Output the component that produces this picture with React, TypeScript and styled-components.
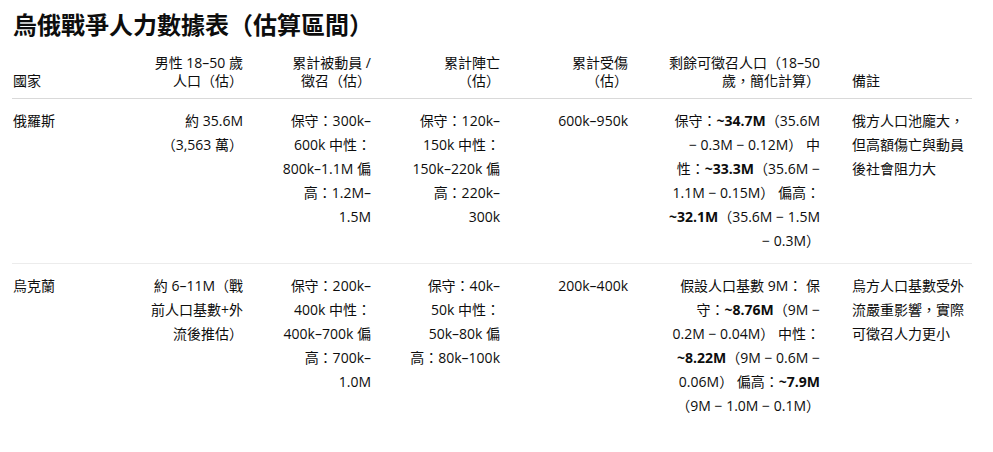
import React from "react";
import styled, { createGlobalStyle } from "styled-components";

const GlobalStyle = createGlobalStyle`
  html, body {
    margin: 0;
    padding: 0;
    background: #ffffff;
  }
  body {
    font-family: "Open Sans", "Noto Sans CJK TC", sans-serif;
    color: #0d0d0d;
    -webkit-font-smoothing: antialiased;
  }
`;

const Page = styled.div`
  padding: 9px 21px 0 12px;
`;

const Title = styled.h1`
  margin: 0 0 0 1px;
  font-size: 24px;
  line-height: 31px;
  font-weight: 700;
  color: #0d0d0d;
`;

const Table = styled.table`
  margin-top: 6px;
  width: 960px;
  table-layout: fixed;
  border-collapse: collapse;
  font-size: 14px;
`;

type Align = "left" | "right";

const Th = styled.th<{ $align: Align }>`
  text-align: ${(p) => p.$align};
  vertical-align: bottom;
  font-weight: 400;
  line-height: 18px;
  padding: 8px 16px 8px 16px;
  white-space: nowrap;
  border-bottom: 1px solid #d9d9d9;
  &:first-child { padding-left: 1px; }
  &:last-child { padding-right: 0; }
`;

const Td = styled.td<{ $align: Align }>`
  text-align: ${(p) => p.$align};
  vertical-align: top;
  line-height: 24px;
  padding: 10px 16px 10px 16px;
  white-space: nowrap;
  &:first-child { padding-left: 1px; }
  &:last-child { padding-right: 0; }
`;

const Row = styled.tr<{ $divider: boolean }>`
  border-bottom: ${(p) => (p.$divider ? "1px solid #ececec" : "none")};
`;

const Strong = styled.strong`
  font-weight: 700;
`;

type Line = React.ReactNode;
type Cell = Line[];

const widths = [115, 132, 128, 129, 128, 192, 136];
const aligns: Align[] = ["left", "right", "right", "right", "right", "right", "left"];

const header: Cell[] = [
  ["國家"],
  ["男性 18–50 歲", "人口（估）"],
  ["累計被動員 /", "徵召（估）"],
  ["累計陣亡", "（估）"],
  ["累計受傷", "（估）"],
  ["剩餘可徵召人口（18–50", "歲，簡化計算）"],
  ["備註"],
];

const rows: Cell[][] = [
  [
    ["俄羅斯"],
    ["約 35.6M", "（3,563 萬）"],
    ["保守：300k–", "600k 中性：", "800k–1.1M 偏", "高：1.2M–", "1.5M"],
    ["保守：120k–", "150k 中性：", "150k–220k 偏", "高：220k–", "300k"],
    ["600k–950k"],
    [
      <>保守：<Strong>~34.7M</Strong>（35.6M</>,
      <>− 0.3M − 0.12M） 中</>,
      <>性：<Strong>~33.3M</Strong>（35.6M −</>,
      <>1.1M − 0.15M） 偏高：</>,
      <><Strong>~32.1M</Strong>（35.6M − 1.5M</>,
      <>− 0.3M）</>,
    ],
    ["俄方人口池龐大，", "但高額傷亡與動員", "後社會阻力大"],
  ],
  [
    ["烏克蘭"],
    ["約 6–11M（戰", "前人口基數+外", "流後推估）"],
    ["保守：200k–", "400k 中性：", "400k–700k 偏", "高：700k–", "1.0M"],
    ["保守：40k–", "50k 中性：", "50k–80k 偏", "高：80k–100k"],
    ["200k–400k"],
    [
      <>假設人口基數 9M： 保</>,
      <>守：<Strong>~8.76M</Strong>（9M −</>,
      <>0.2M − 0.04M） 中性：</>,
      <><Strong>~8.22M</Strong>（9M − 0.6M −</>,
      <>0.06M） 偏高：<Strong>~7.9M</Strong></>,
      <>（9M − 1.0M − 0.1M）</>,
    ],
    ["烏方人口基數受外", "流嚴重影響，實際", "可徵召人力更小"],
  ],
];

function Lines({ lines }: { lines: Cell }) {
  return (
    <>
      {lines.map((line, i) => (
        <React.Fragment key={i}>
          {i > 0 && <br />}
          {line}
        </React.Fragment>
      ))}
    </>
  );
}

export default function App() {
  return (
    <>
      <GlobalStyle />
      <Page>
        <Title>烏俄戰爭人力數據表（估算區間）</Title>
        <Table>
          <colgroup>
            {widths.map((w, i) => (
              <col key={i} width={w} />
            ))}
          </colgroup>
          <thead>
            <tr>
              {header.map((cell, i) => (
                <Th key={i} $align={aligns[i]}>
                  <Lines lines={cell} />
                </Th>
              ))}
            </tr>
          </thead>
          <tbody>
            {rows.map((row, r) => (
              <Row key={r} $divider={r < rows.length - 1}>
                {row.map((cell, i) => (
                  <Td key={i} $align={aligns[i]}>
                    <Lines lines={cell} />
                  </Td>
                ))}
              </Row>
            ))}
          </tbody>
        </Table>
      </Page>
    </>
  );
}
